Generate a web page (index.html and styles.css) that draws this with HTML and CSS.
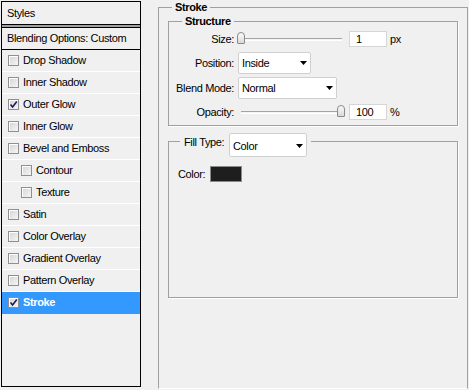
FILE: index.html
```html
<!DOCTYPE html>
<html>
<head>
<meta charset="utf-8">
<title>Layer Style - Stroke</title>
<link rel="stylesheet" href="styles.css">
</head>
<body>
<div class="dialog">
  <div class="styles-panel">
    <div class="panel-head">Styles</div>
    <div class="panel-sep"></div>
    <div class="panel-blend">Blending Options: Custom</div>
    <ul class="style-list">
      <li class="item"><span class="cb"></span>Drop Shadow</li>
      <li class="item"><span class="cb"></span>Inner Shadow</li>
      <li class="item"><span class="cb"><svg class="tick" viewBox="0 0 9 9" width="9" height="9"><path d="M1.5 4.5 L3.6 7 L7.8 1.6" fill="none" stroke="#1c1c5a" stroke-width="1.6"/></svg></span>Outer Glow</li>
      <li class="item"><span class="cb"></span>Inner Glow</li>
      <li class="item"><span class="cb"></span>Bevel and Emboss</li>
      <li class="item sub"><span class="cb"></span>Contour</li>
      <li class="item sub"><span class="cb"></span>Texture</li>
      <li class="item"><span class="cb"></span>Satin</li>
      <li class="item"><span class="cb"></span>Color Overlay</li>
      <li class="item"><span class="cb"></span>Gradient Overlay</li>
      <li class="item"><span class="cb"></span>Pattern Overlay</li>
      <li class="item selected"><span class="cb"><svg class="tick" viewBox="0 0 9 9" width="9" height="9"><path d="M1.5 4.5 L3.6 7 L7.8 1.6" fill="none" stroke="#1c1c5a" stroke-width="1.6"/></svg></span>Stroke</li>
    </ul>
  </div>

  <fieldset class="group outer">
    <legend class="title">Stroke</legend>

    <fieldset class="group structure">
      <legend class="title">Structure</legend>
      <div class="row row-size">
        <span class="lbl">Size:</span>
        <div class="slider"><div class="track"></div><div class="thumb" style="left:0px"></div></div>
        <div class="num">1</div>
        <span class="unit">px</span>
      </div>
      <div class="row row-position">
        <span class="lbl">Position:</span>
        <div class="select sel-position"><span>Inside</span><svg class="arrow" viewBox="0 0 7 4" width="7" height="4"><polygon points="0,0 7,0 3.5,4" fill="#000"/></svg></div>
      </div>
      <div class="row row-blend">
        <span class="lbl">Blend Mode:</span>
        <div class="select sel-blend"><span>Normal</span><svg class="arrow" viewBox="0 0 7 4" width="7" height="4"><polygon points="0,0 7,0 3.5,4" fill="#000"/></svg></div>
      </div>
      <div class="row row-opacity">
        <span class="lbl">Opacity:</span>
        <div class="slider"><div class="track"></div><div class="thumb" style="left:100px"></div></div>
        <div class="num">100</div>
        <span class="unit">%</span>
      </div>
    </fieldset>

    <fieldset class="group fill">
      <legend class="fill-legend">
        <span class="fill-lbl">Fill Type:</span>
        <div class="select sel-fill"><span>Color</span><svg class="arrow" viewBox="0 0 7 4" width="7" height="4"><polygon points="0,0 7,0 3.5,4" fill="#000"/></svg></div>
      </legend>
      <div class="row color-row">
        <span class="color-lbl">Color:</span>
        <span class="swatch"></span>
      </div>
    </fieldset>
  </fieldset>
</div>
</body>
</html>
```

FILE: styles.css
```css
html, body {
  margin: 0;
  padding: 0;
}
body {
  background: #f0f0f0;
  width: 469px;
  height: 390px;
  overflow: hidden;
  font-family: "Liberation Sans", Arial, sans-serif;
  font-size: 11px;
  line-height: 13px;
  letter-spacing: -0.35px;
  color: #000;
  white-space: nowrap;
}

.dialog {
  display: flex;
  align-items: flex-start;
}

/* ---------- left styles list ---------- */
.styles-panel {
  margin: 1px 0 0 1px;
  width: 140px;
  height: 386px;
  box-sizing: border-box;
  border: 1px solid #000;
  display: flex;
  flex-direction: column;
}
.panel-head {
  height: 22px;
  border-bottom: 1px solid #000;
  padding-left: 5px;
  display: flex;
  align-items: center;
}
.panel-sep {
  height: 2px;
  background: #a0a0a0;
}
.panel-blend {
  height: 21px;
  border-top: 1px solid #000;
  border-bottom: 1px solid #000;
  padding-left: 5px;
  display: flex;
  align-items: center;
}
.style-list {
  list-style: none;
  margin: 0;
  padding: 0;
}
.item {
  height: 21px;
  border-bottom: 1px solid #fff;
  padding-left: 6px;
  display: flex;
  align-items: center;
}
.item.sub {
  padding-left: 19px;
}
.item.selected {
  background: #3399ff;
  color: #fff;
  font-weight: bold;
  border-bottom-color: #3399ff;
}
.cb {
  width: 11px;
  height: 11px;
  box-sizing: border-box;
  border: 1px solid #8e8f8f;
  background: linear-gradient(135deg, #d4d4d4, #f6f6f6);
  box-shadow: inset 1px 1px 0 #fff;
  margin-right: 4px;
  display: flex;
  align-items: center;
  justify-content: center;
  flex: none;
}
.tick {
  display: block;
}

/* ---------- group boxes ---------- */
.group {
  margin: 0;
  min-width: 0;
  box-sizing: border-box;
  border: 1px solid #a0a0a0;
}
.title {
  font-weight: bold;
  line-height: 14px;
  height: 14px;
  padding: 0 3px;
  margin-left: 4px;
}
.outer {
  margin-left: 17px;
  width: 310px;
  height: 389px;
  padding: 0 9px;
  border-bottom-color: #fff;
}
.structure {
  width: 290px;
  padding: 0 9px 5px 9px;
  box-shadow: 1px 1px 0 #fff;
}

.row {
  display: flex;
  align-items: center;
}
.lbl {
  width: 56px;
  display: flex;
  justify-content: flex-end;
  flex: none;
}
.row-size {
  margin-top: 1px;
  height: 20px;
}
.row-position {
  margin-top: 3px;
  height: 22px;
}
.row-blend {
  margin-top: 3px;
  height: 22px;
}
.row-opacity {
  margin-top: 5px;
  height: 16px;
}

/* slider */
.slider {
  position: relative;
  width: 109px;
  height: 100%;
  margin-left: 3px;
  display: flex;
  align-items: center;
  flex: none;
}
.track {
  flex: 1;
  margin: 0 4px 0 4px;
  height: 1px;
  background: #f4f4f4;
  border-top: 1px solid #a4a4a4;
  border-bottom: 1px solid #fff;
}
.thumb {
  position: absolute;
  top: 50%;
  margin-top: -7px;
  width: 8px;
  height: 12px;
  box-sizing: border-box;
  border: 1px solid #8a8a8a;
  border-radius: 4px 4px 1px 1px;
  background: linear-gradient(to bottom, #fbfbfb, #d9d9d9);
}

/* number inputs */
.num {
  margin-left: 3px;
  width: 38px;
  height: 16px;
  box-sizing: border-box;
  background: #fff;
  border: 1px solid #d6d6d6;
  padding-left: 6px;
  line-height: 14px;
  flex: none;
}
.unit {
  margin-left: 3px;
}

/* dropdowns */
.select {
  margin-left: 4px;
  box-sizing: border-box;
  background: #fff;
  border: 1px solid #d0d0d0;
  border-radius: 2px;
  padding: 0 3px 0 3px;
  display: flex;
  align-items: center;
  justify-content: space-between;
  flex: none;
}
.arrow {
  display: block;
  flex: none;
}
.sel-position {
  width: 73px;
  height: 22px;
}
.sel-blend {
  width: 99px;
  height: 22px;
}

/* fill type group */
.fill {
  margin-top: 7px;
  width: 290px;
  height: 165px;
  padding: 17px 9px 0 9px;
  box-shadow: 1px 1px 0 #fff;
}
.fill-legend {
  display: flex;
  align-items: flex-start;
  height: 16px;
  padding: 0 4px;
  margin-left: 2px;
}
.fill-lbl {
  width: 45px;
  padding-top: 3px;
  flex: none;
}
.sel-fill {
  margin-left: 0;
  width: 78px;
  height: 24px;
  padding-top: 2px;
}
.color-row {
  height: 16px;
}
.color-lbl {
  width: 32px;
  flex: none;
}
.swatch {
  width: 32px;
  height: 16px;
  box-sizing: border-box;
  border: 1px solid #8a8a8a;
  background: #1e1e1e;
}
```
